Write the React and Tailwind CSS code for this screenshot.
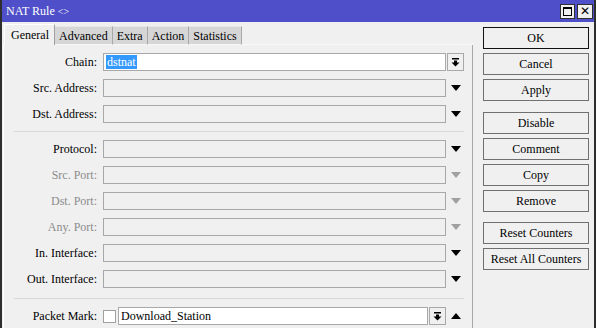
const serif = { fontFamily: '"Liberation Serif", "Times New Roman", serif' };

function DownTri({ gray }) {
  return (
    <svg width="10" height="6" viewBox="0 0 10 6">
      <path d="M0 0 H10 L5 6 Z" fill={gray ? "#a0a0a0" : "#000"} />
    </svg>
  );
}

function UpTri() {
  return (
    <svg width="10" height="6" viewBox="0 0 10 6">
      <path d="M0 6 H10 L5 0 Z" fill="#000" />
    </svg>
  );
}

function DropBtn() {
  return (
    <div className="w-[17px] h-[18px] border border-[#a8a8a8] bg-[#f0f0f0] flex items-center justify-center">
      <svg width="9" height="9" viewBox="0 0 9 9">
        <rect x="1" y="0" width="7" height="1.5" fill="#000" />
        <rect x="3" y="2.5" width="3" height="2.5" fill="#000" />
        <path d="M0.5 4.5 H8.5 L4.5 8.5 Z" fill="#000" />
      </svg>
    </div>
  );
}

function Row({ label, gray, children }) {
  return (
    <div className="flex items-center h-[18px]">
      <div className={`w-[94px] text-right text-[12px] leading-none pr-[1px] ${gray ? "text-[#8c8c8c]" : "text-black"}`}>
        {label}:
      </div>
      <div className="flex items-center ml-[5px]">{children}</div>
    </div>
  );
}

function EmptyRow({ label, gray }) {
  return (
    <Row label={label} gray={gray}>
      <div className="w-[343px] h-[18px] border border-[#a8a8a8] bg-[#f0f0f0]" />
      <div className="w-[18px] flex justify-center ml-[1px]">
        <DownTri gray={gray} />
      </div>
    </Row>
  );
}

const tabs = ["Advanced", "Extra", "Action", "Statistics"];

export default function App() {
  return (
    <div
      className="w-[596px] h-[328px] bg-[#f0f0f0] border-x-2 border-[#2e2e2e] flex flex-col overflow-hidden"
      style={serif}
    >
      <div className="h-[22px] bg-[#4f4fc9] flex items-center justify-between pl-[4px] pr-[1px] shrink-0">
        <div className="text-white text-[12px] leading-none">
          NAT Rule <span className="text-[10px]">&lt;&gt;</span>
        </div>
        <div className="flex gap-[2px]">
          <div className="w-[15px] h-[15px] bg-[#f0f0f0] border border-[#303030] flex items-center justify-center">
            <div className="w-[9px] h-[9px] border border-black border-t-2" />
          </div>
          <div className="w-[16px] h-[15px] bg-[#f0f0f0] border border-[#303030] flex items-center justify-center text-[12px] font-bold leading-none" style={{ fontFamily: '"DejaVu Sans", sans-serif' }}>
            ✕
          </div>
        </div>
      </div>

      <div className="flex flex-1">
        <div className="w-[471px] flex flex-col pl-[1px] pt-[2px]">
          <div className="flex items-end h-[21px]">
            <div className="w-[51px] h-[21px] bg-[#f0f0f0] border-l border-t border-r border-l-white border-t-white border-r-[#a0a0a0] text-[12px] leading-none flex items-center pl-[6px] ml-[1px]">
              General
            </div>
            {tabs.map((t) => (
              <div
                key={t}
                className="h-[19px] bg-[#d6d6d6] border-t border-r border-b border-t-[#e8e8e8] border-r-[#a8a8a8] border-b-[#f8f8f8] text-[12px] leading-none flex items-center px-[4px]"
              >
                {t}
              </div>
            ))}
            <div className="flex-1 border-b border-[#f8f8f8]" />
          </div>

          <div className="flex-1 border-l border-r border-l-white border-r-[#a8a8a8] pt-[8px] flex flex-col">
            <div className="flex flex-col gap-[8px]">
              <Row label="Chain">
                <div className="w-[343px] h-[18px] border border-[#a8a8a8] bg-white flex items-center pl-[2px]">
                  <span className="bg-[#3399ff] text-white text-[12px] leading-[14px] px-[1px]">dstnat</span>
                </div>
                <div className="ml-[1px]">
                  <DropBtn />
                </div>
              </Row>
              <EmptyRow label="Src. Address" />
              <EmptyRow label="Dst. Address" />
            </div>

            <div className="h-[1px] bg-[#d8d8d8] ml-[10px] mr-[8px] mt-[8px] mb-[8px]" />

            <div className="flex flex-col gap-[8px]">
              <EmptyRow label="Protocol" />
              <EmptyRow label="Src. Port" gray />
              <EmptyRow label="Dst. Port" gray />
              <EmptyRow label="Any. Port" gray />
              <EmptyRow label="In. Interface" />
              <EmptyRow label="Out. Interface" />
            </div>

            <div className="h-[1px] bg-[#d8d8d8] ml-[10px] mr-[8px] mt-[10px] mb-[8px]" />

            <Row label="Packet Mark">
              <div className="w-[13px] h-[13px] border border-[#a0a0a0] bg-white" />
              <div className="w-[310px] h-[18px] border border-[#a8a8a8] bg-white flex items-center pl-[2px] ml-[2px] text-[12px] leading-none">
                Download_Station
              </div>
              <div className="ml-[1px]">
                <DropBtn />
              </div>
              <div className="w-[18px] flex justify-center ml-[1px]">
                <UpTri />
              </div>
            </Row>
          </div>
        </div>

        <div className="flex flex-col pl-[10px] pt-[5px]">
          <Btn def>OK</Btn>
          <div className="h-[4px]" />
          <Btn>Cancel</Btn>
          <div className="h-[4px]" />
          <Btn>Apply</Btn>
          <div className="h-[11px]" />
          <Btn>Disable</Btn>
          <div className="h-[4px]" />
          <Btn>Comment</Btn>
          <div className="h-[4px]" />
          <Btn>Copy</Btn>
          <div className="h-[4px]" />
          <Btn>Remove</Btn>
          <div className="h-[10px]" />
          <Btn>Reset Counters</Btn>
          <div className="h-[4px]" />
          <Btn>Reset All Counters</Btn>
        </div>
      </div>
    </div>
  );
}

function Btn({ children, def }) {
  return (
    <div
      className={`w-[106px] h-[22px] bg-[#f0f0f0] flex items-center justify-center text-[12px] leading-none ${
        def ? "border border-[#111]" : "border border-[#707070]"
      }`}
    >
      {children}
    </div>
  );
}
